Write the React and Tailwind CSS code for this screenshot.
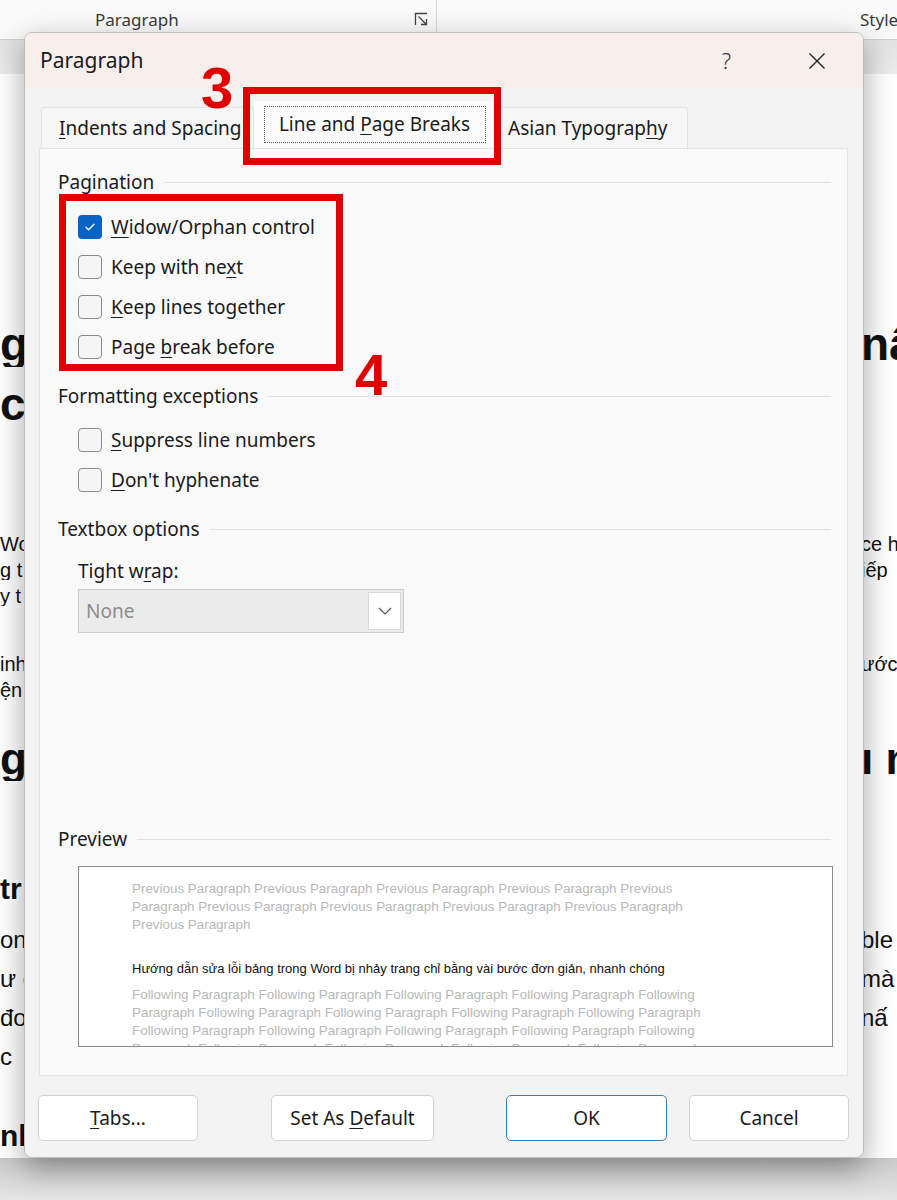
import React from "react";

const docRows = [
  { mt: "mt-[240px]", h: "h-[60px]", cls: "text-[46px] font-bold", l: "g", r: "nẩ" },
  { mt: "mt-0", h: "h-[60px]", cls: "text-[46px] font-bold", l: "cl", r: "" },
  { mt: "mt-[97px]", h: "h-[26px]", cls: "text-[20px]", l: "Wo", r: "ce h" },
  { mt: "mt-0", h: "h-[26px]", cls: "text-[20px]", l: "g t", r: "iếp" },
  { mt: "mt-0", h: "h-[26px]", cls: "text-[20px]", l: "y t", r: "" },
  { mt: "mt-[42px]", h: "h-[26px]", cls: "text-[20px]", l: "inh", r: "ước" },
  { mt: "mt-0", h: "h-[26px]", cls: "text-[20px]", l: "ện", r: "" },
  { mt: "mt-[26px]", h: "h-[60px]", cls: "text-[44px] font-bold", l: "g", r: "ı n" },
  { mt: "mt-[80px]", h: "h-[40px]", cls: "text-[30px] font-bold", l: "tr", r: "" },
  { mt: "mt-[11px]", h: "h-[39px]", cls: "text-[24px]", l: "ong", r: "ble" },
  { mt: "mt-0", h: "h-[39px]", cls: "text-[24px]", l: "ư c", r: "mà" },
  { mt: "mt-0", h: "h-[39px]", cls: "text-[24px]", l: "đo", r: "nấ" },
  { mt: "mt-0", h: "h-[39px]", cls: "text-[24px]", l: " c", r: "" },
  { mt: "mt-[40px]", h: "h-[40px]", cls: "text-[30px] font-bold", l: "nh", r: "" },
];

const prevLines = [
  "Previous Paragraph Previous Paragraph Previous Paragraph Previous Paragraph Previous",
  "Paragraph Previous Paragraph Previous Paragraph Previous Paragraph Previous Paragraph",
  "Previous Paragraph",
];

const followLines = [
  "Following Paragraph Following Paragraph Following Paragraph Following Paragraph Following",
  "Paragraph Following Paragraph Following Paragraph Following Paragraph Following Paragraph",
  "Following Paragraph Following Paragraph Following Paragraph Following Paragraph Following",
  "Paragraph Following Paragraph Following Paragraph Following Paragraph Following Paragraph",
];

function Check({ checked, children }) {
  return (
    <div className="flex h-[40px] items-center gap-[9px] pl-[20px]">
      {checked ? (
        <span className="flex h-[24px] w-[24px] items-center justify-center rounded-[4px] bg-[#0a63c2]">
          <svg width="14" height="14" viewBox="0 0 14 14" fill="none">
            <path d="M3 7.2l2.6 2.6L11 4.2" stroke="#fff" strokeWidth="1.3" strokeLinecap="round" strokeLinejoin="round" />
          </svg>
        </span>
      ) : (
        <span className="h-[24px] w-[24px] rounded-[4px] border border-[#8b8b8b] bg-[#f5f5f5]" />
      )}
      <span>{children}</span>
    </div>
  );
}

function Section({ title, className }) {
  return (
    <div className={"flex h-[24px] items-center gap-[10px] " + className}>
      <span>{title}</span>
      <span className="h-px flex-1 bg-[#e2e2e2]" />
    </div>
  );
}

function U({ children }) {
  return <span className="underline decoration-1 underline-offset-[3px]">{children}</span>;
}

export default function App() {
  return (
    <div className="relative flex h-[1200px] w-[897px] flex-col overflow-hidden bg-white font-['Noto_Sans',sans-serif] text-[#1b1b1b]">
      {/* ribbon */}
      <div className="flex h-[39px] items-center bg-[#fafafa] text-[17px] text-[#3a3a3a]">
        <span className="ml-[95px]">Paragraph</span>
        <svg className="ml-[235px]" width="15" height="15" viewBox="0 0 15 15" fill="none" stroke="#444" strokeWidth="1.3">
          <path d="M1.5 13V1.5H13" />
          <path d="M4.5 4.5l7.5 7.5M12.5 7v5.5H7" />
        </svg>
        <span className="ml-[7px] h-full w-px bg-[#d6d6d6]" />
        <span className="ml-auto w-[37px] overflow-hidden whitespace-nowrap">Styles</span>
      </div>
      <div className="h-[35px] border-t border-[#cfcfcf] bg-gradient-to-b from-[#e2e2e2] to-[#ececec]" />

      {/* document behind the dialog */}
      <div className="flex flex-1 flex-col font-['Liberation_Sans',Arial,sans-serif] text-[#111]">
        {docRows.map((row, i) => (
          <div key={i} className={"flex items-center justify-between whitespace-nowrap " + row.mt + " " + row.h + " " + row.cls}>
            <span className="w-[28px] overflow-hidden leading-none">{row.l}</span>
            <span className="w-[36px] overflow-hidden leading-none">{row.r}</span>
          </div>
        ))}
      </div>
      <div className="h-[42px] bg-gradient-to-b from-[#c9c9c9] to-[#e6e6e6]" />

      {/* dialog */}
      <div className="absolute left-[24px] top-[32px] flex h-[1126px] w-[840px] flex-col overflow-hidden rounded-[8px] border border-[#bdbdbd] bg-[#f3f3f3] text-[19px] shadow-[0_10px_30px_rgba(0,0,0,0.35)]">
        <div className="flex h-[55px] items-center bg-[#f8efec]">
          <span className="ml-[15px] text-[21px]">Paragraph</span>
          <span className="ml-auto mr-[77px] text-[22px] font-light text-[#333]">?</span>
          <svg className="mr-[37px]" width="18" height="18" viewBox="0 0 18 18" fill="none" stroke="#222" strokeWidth="1.4">
            <path d="M1.5 1.5l15 15M16.5 1.5l-15 15" />
          </svg>
        </div>

        {/* tabs */}
        <div className="ml-[16px] mt-[13px] flex h-[47px] items-end">
          <div className="flex h-[41px] w-[213px] items-center rounded-t-[4px] border border-b-0 border-[#e3e3e3] bg-[#f6f6f6] pl-[17px]">
            <span><U>I</U>ndents and Spacing</span>
          </div>
          <div className="flex h-[47px] w-[241px] items-center justify-center bg-[#fbfbfb]">
            <div className="flex h-[37px] w-[222px] items-center justify-center border border-dotted border-[#555]">
              <span>Line and <U>P</U>age Breaks</span>
            </div>
          </div>
          <div className="flex h-[41px] w-[193px] items-center rounded-t-[4px] border border-b-0 border-[#e3e3e3] bg-[#f6f6f6] pl-[12px]">
            <span>Asian Typograp<U>h</U>y</span>
          </div>
        </div>

        {/* panel */}
        <div className="ml-[14px] flex h-[928px] w-[809px] flex-col border border-[#e3e3e3] bg-[#f9f9f9] pl-[18px] pr-[16px]">
          <Section title="Pagination" className="mt-[21px]" />
          <div className="mt-[13px]">
            <Check checked><U>W</U>idow/Orphan control</Check>
            <Check>Keep with ne<U>x</U>t</Check>
            <Check><U>K</U>eep lines together</Check>
            <Check>Page <U>b</U>reak before</Check>
          </div>
          <Section title="Formatting exceptions" className="mt-[17px]" />
          <div className="mt-[12px]">
            <Check><U>S</U>uppress line numbers</Check>
            <Check><U>D</U>on't hyphenate</Check>
          </div>
          <Section title="Textbox options" className="mt-[17px]" />
          <div className="ml-[20px] mt-[18px] flex h-[24px] items-center">
            <span>Tight w<U>r</U>ap:</span>
          </div>
          <div className="ml-[20px] mt-[6px] flex h-[44px] w-[326px] items-center border border-[#cdcdcd] bg-[#ebebeb] pl-[7px] pr-[2px]">
            <span className="text-[#8c8c8c]">None</span>
            <span className="ml-auto flex h-[38px] w-[33px] items-center justify-center border border-[#d9d9d9] bg-white">
              <svg width="14" height="8" viewBox="0 0 14 8" fill="none" stroke="#555" strokeWidth="1.2">
                <path d="M1 1l6 6 6-6" />
              </svg>
            </span>
          </div>
          <Section title="Preview" className="mt-[194px]" />
          <div className="ml-[20px] mt-[15px] h-[181px] w-[755px] overflow-hidden border border-[#8a8a8a] bg-white pl-[53px] pt-[13px] font-['Liberation_Sans',Arial,sans-serif] text-[13.4px] leading-[18px]">
            {prevLines.map((t) => (
              <div key={t} className="whitespace-nowrap text-[#b8b8b8]">{t}</div>
            ))}
            <div className="mb-[8px] mt-[26px] whitespace-nowrap text-[13px] text-[#111]">
              Hướng dẫn sửa lỗi bảng trong Word bị nhảy trang chỉ bằng vài bước đơn giản, nhanh chóng
            </div>
            {followLines.map((t, i) => (
              <div key={i} className="whitespace-nowrap text-[#b8b8b8]">{t}</div>
            ))}
          </div>
        </div>

        {/* buttons */}
        <div className="ml-[13px] mt-[19px] flex h-[46px]">
          <button className="w-[160px] rounded-[5px] border border-[#d3d3d3] bg-white"><U>T</U>abs...</button>
          <button className="ml-[73px] w-[163px] rounded-[5px] border border-[#d3d3d3] bg-white">Set As <U>D</U>efault</button>
          <button className="ml-[72px] w-[161px] rounded-[5px] border-[1.5px] border-[#3f7fbf] bg-white">OK</button>
          <button className="ml-[22px] w-[160px] rounded-[5px] border border-[#d3d3d3] bg-white">Cancel</button>
        </div>
      </div>

      {/* annotations */}
      <div className="absolute left-[243px] top-[87px] h-[78px] w-[258px] border-[7px] border-[#e10000]" />
      <div className="absolute left-[59px] top-[194px] h-[177px] w-[284px] border-[7px] border-[#e10000]" />
      <span className="absolute left-[201px] top-[44px] font-['Liberation_Sans',Arial,sans-serif] text-[58px] font-bold text-[#e10000]">3</span>
      <span className="absolute left-[355px] top-[331px] font-['Liberation_Sans',Arial,sans-serif] text-[58px] font-bold text-[#e10000]">4</span>
    </div>
  );
}
